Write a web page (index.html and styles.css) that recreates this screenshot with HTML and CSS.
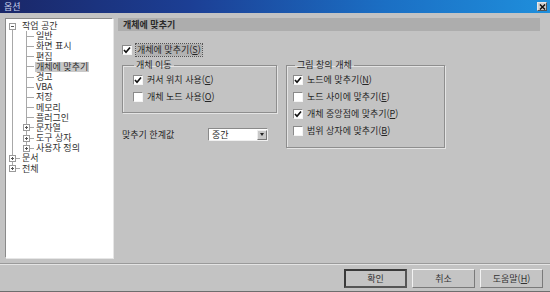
FILE: index.html
```html
<!DOCTYPE html>
<html lang="ko">
<head>
    <meta charset="UTF-8">
    <title>옵션</title>
    <link rel="stylesheet" href="styles.css">
</head>
<body>
    <div class="window">
        <div class="titlebar">
            <span class="title">옵션</span>
            <span class="closebtn">
                <svg width="8" height="7" viewBox="0 0 8 7"><path d="M1 0.5 L7 6.5 M7 0.5 L1 6.5" stroke="#111" stroke-width="1.6"/></svg>
            </span>
        </div>

        <div class="main">
            <div class="tree">
                <div class="row"><span class="cell first"><span class="exp minus"></span></span><span class="txt">작업 공간</span></div>
                <div class="row"><span class="cell v"></span><span class="cell t"></span><span class="txt">일반</span></div>
                <div class="row"><span class="cell v"></span><span class="cell t"></span><span class="txt">화면 표시</span></div>
                <div class="row"><span class="cell v"></span><span class="cell t"></span><span class="txt">편집</span></div>
                <div class="row"><span class="cell v"></span><span class="cell t"></span><span class="txt selected">개체에 맞추기</span></div>
                <div class="row"><span class="cell v"></span><span class="cell t"></span><span class="txt">경고</span></div>
                <div class="row"><span class="cell v"></span><span class="cell t"></span><span class="txt">VBA</span></div>
                <div class="row"><span class="cell v"></span><span class="cell t"></span><span class="txt">저장</span></div>
                <div class="row"><span class="cell v"></span><span class="cell t"></span><span class="txt">메모리</span></div>
                <div class="row"><span class="cell v"></span><span class="cell t"></span><span class="txt">플러그인</span></div>
                <div class="row"><span class="cell v"></span><span class="cell t"><span class="exp plus"></span></span><span class="txt">문자열</span></div>
                <div class="row"><span class="cell v"></span><span class="cell t"><span class="exp plus"></span></span><span class="txt">도구 상자</span></div>
                <div class="row"><span class="cell v"></span><span class="cell l"><span class="exp plus"></span></span><span class="txt">사용자 정의</span></div>
                <div class="row"><span class="cell t"><span class="exp plus"></span></span><span class="txt">문서</span></div>
                <div class="row"><span class="cell l"><span class="exp plus"></span></span><span class="txt">전체</span></div>
            </div>

            <div class="page">
                <div class="page-head">개체에 맞추기</div>

                <div class="check top-check">
                    <span class="box on"></span>
                    <span class="focus">개체에 맞추기(<u>S</u>)</span>
                </div>

                <div class="columns">
                    <div class="col-left">
                        <fieldset class="group move">
                            <legend>개체 이동</legend>
                            <div class="check"><span class="box on"></span><span>커서 위치 사용(<u>C</u>)</span></div>
                            <div class="check"><span class="box"></span><span>개체 노드 사용(<u>O</u>)</span></div>
                        </fieldset>
                        <div class="threshold">
                            <span class="thr-label">맞추기 한계값</span>
                            <div class="select">
                                <span class="sel-value">중간</span>
                                <span class="sel-arrow"></span>
                            </div>
                        </div>
                    </div>

                    <fieldset class="group draw">
                        <legend>그림 창의 개체</legend>
                        <div class="check"><span class="box on"></span><span>노드에 맞추기(<u>N</u>)</span></div>
                        <div class="check"><span class="box"></span><span>노드 사이에 맞추기(<u>E</u>)</span></div>
                        <div class="check"><span class="box on"></span><span>개체 중앙점에 맞추기(<u>P</u>)</span></div>
                        <div class="check"><span class="box"></span><span>범위 상자에 맞추기(<u>B</u>)</span></div>
                    </fieldset>
                </div>
            </div>
        </div>

        <div class="buttons">
            <button class="btn default">확인</button>
            <button class="btn">취소</button>
            <button class="btn">도움말(<u>H</u>)</button>
        </div>
    </div>
</body>
</html>
```

FILE: styles.css
```css
body {
    margin: 0;
    background-color: #c3c3c3;
    font-family: "Noto Sans CJK KR", "Noto Sans", sans-serif;
    font-size: 9px;
    color: #262626;
}
.window {
    width: 550px;
    height: 291px;
    border-bottom: 1px solid #6e6e6e;
    display: flex;
    flex-direction: column;
}
.titlebar {
    height: 13px;
    background: linear-gradient(90deg, #1a2768 0%, #1c3f95 35%, #1b6fc4 70%, #1f8fdc 100%);
    display: flex;
    align-items: center;
    justify-content: space-between;
    padding: 0 3px 0 4px;
}
.title {
    color: #c9d2ee;
    font-size: 9px;
    line-height: 13px;
}
.closebtn {
    width: 10px;
    height: 9px;
    background: #cfcfcf;
    border: 1px solid #e8e8e8;
    border-right-color: #555;
    border-bottom-color: #555;
    box-sizing: border-box;
    display: flex;
    align-items: center;
    justify-content: center;
}
.closebtn svg {
    display: block;
    width: 7px;
    height: 6px;
}

.main {
    display: flex;
    height: 250px;
    border-bottom: 1px solid #9a9a9a;
}

/* tree */
.tree {
    width: 108px;
    height: 240px;
    margin: 5px 0 0 5px;
    background: #fff;
    border: 1px solid #fff;
    border-top-color: #8a8a8a;
    border-left-color: #8a8a8a;
    box-shadow: 1px 1px 0 #e6e6e6;
    box-sizing: border-box;
    padding-top: 2px;
}
.row {
    display: flex;
    align-items: center;
    height: 10.2px;
}
.cell {
    width: 14px;
    height: 100%;
    flex: 0 0 14px;
    display: flex;
    align-items: center;
    justify-content: center;
}
.cell.first {
    background: linear-gradient(#a8a8a8, #a8a8a8) 6px 100% / 1px 50% no-repeat;
}
.cell.v {
    background: linear-gradient(#a8a8a8, #a8a8a8) 6px 0 / 1px 100% no-repeat;
}
.cell.t {
    background:
        linear-gradient(#a8a8a8, #a8a8a8) 6px 0 / 1px 100% no-repeat,
        linear-gradient(#a8a8a8, #a8a8a8) 6px 50% / 8px 1px no-repeat;
}
.cell.l {
    background:
        linear-gradient(#a8a8a8, #a8a8a8) 6px 0 / 1px 50% no-repeat,
        linear-gradient(#a8a8a8, #a8a8a8) 6px 50% / 8px 1px no-repeat;
}
.exp {
    width: 7px;
    height: 7px;
    border: 1px solid #9a9a9a;
    background-color: #fff;
    box-sizing: border-box;
    margin-left: -1px;
}
.exp.minus {
    background: linear-gradient(#555, #555) 50% 50% / 3px 1px no-repeat, #fff;
}
.exp.plus {
    background:
        linear-gradient(#555, #555) 50% 50% / 3px 1px no-repeat,
        linear-gradient(#555, #555) 50% 50% / 1px 3px no-repeat,
        #fff;
}
.txt {
    display: block;
    height: 10.2px;
    line-height: 10.2px;
    padding: 0 1px;
    margin-left: 1px;
    white-space: nowrap;
    color: #303030;
}
.txt.selected {
    background: #c8c8c8;
}

/* right page */
.page {
    flex: 1;
    margin: 5px 10px 0 5px;
}
.page-head {
    height: 13px;
    line-height: 13px;
    background: #adadad;
    font-weight: bold;
    padding-left: 5px;
    color: #2a2a2a;
}
.check {
    display: flex;
    align-items: center;
    gap: 4px;
    height: 17px;
}
.box {
    width: 10px;
    height: 10px;
    flex: 0 0 10px;
    background: #fff;
    border: 1px solid #f4f4f4;
    border-top-color: #8a8a8a;
    border-left-color: #8a8a8a;
    box-sizing: border-box;
}
.box.on {
    background: #fff url("data:image/svg+xml;utf8,<svg xmlns='http://www.w3.org/2000/svg' width='8' height='8'><path d='M1 4 L3 6.2 L7 1.5' fill='none' stroke='%23111' stroke-width='1.7'/></svg>") center / 8px 8px no-repeat;
}
.top-check {
    margin-top: 10px;
    padding-left: 4px;
}
.focus {
    background: #b2b2b2;
    outline: 1px dotted #555;
    padding: 0 1px;
    line-height: 12px;
}

.columns {
    display: flex;
    gap: 9px;
    padding-left: 4px;
    margin-top: 1px;
}
.col-left {
    width: 155px;
}
.group {
    margin: 0;
    border: 1px solid #8e8e8e;
    box-shadow: inset 1px 1px 0 #e4e4e4, 1px 1px 0 #e4e4e4;
    box-sizing: border-box;
}
.group legend {
    padding: 0 2px;
    line-height: 12px;
}
.move {
    height: 54px;
    padding: 0 0 0 10px;
}
.move legend {
    margin-left: 1px;
}
.draw {
    width: 159px;
    height: 89px;
    padding: 0 0 0 6px;
}
.draw legend {
    margin-left: 2px;
}
.threshold {
    display: flex;
    align-items: center;
    margin-top: 15px;
    height: 13px;
}
.thr-label {
    width: 86px;
}
.select {
    width: 60px;
    height: 13px;
    background: #fff;
    border: 1px solid #f0f0f0;
    border-top-color: #8a8a8a;
    border-left-color: #8a8a8a;
    box-sizing: border-box;
    display: flex;
    align-items: center;
    justify-content: space-between;
}
.sel-value {
    padding-left: 3px;
    line-height: 11px;
}
.sel-arrow {
    width: 10px;
    height: 10px;
    background: #c8c8c8;
    border: 1px solid #eee;
    border-right-color: #777;
    border-bottom-color: #777;
    box-sizing: border-box;
    display: flex;
    align-items: center;
    justify-content: center;
}
.sel-arrow::after {
    content: "";
    border-left: 2px solid transparent;
    border-right: 2px solid transparent;
    border-top: 3px solid #222;
}

/* bottom buttons */
.buttons {
    border-top: 1px solid #e4e4e4;
    display: flex;
    justify-content: flex-end;
    gap: 5px;
    padding: 4px 7px 0 0;
}
.btn {
    width: 63px;
    height: 19px;
    font-family: "Noto Sans CJK KR", "Noto Sans", sans-serif;
    font-size: 9px;
    color: #333;
    background: #c4c4c4;
    border: 1px solid #f2f2f2;
    border-right-color: #7a7a7a;
    border-bottom-color: #7a7a7a;
    padding: 0;
    line-height: 16px;
}
.btn.default {
    border-width: 2px;
    border-color: #3a3a3a #555 #555 #3a3a3a;
}
```
